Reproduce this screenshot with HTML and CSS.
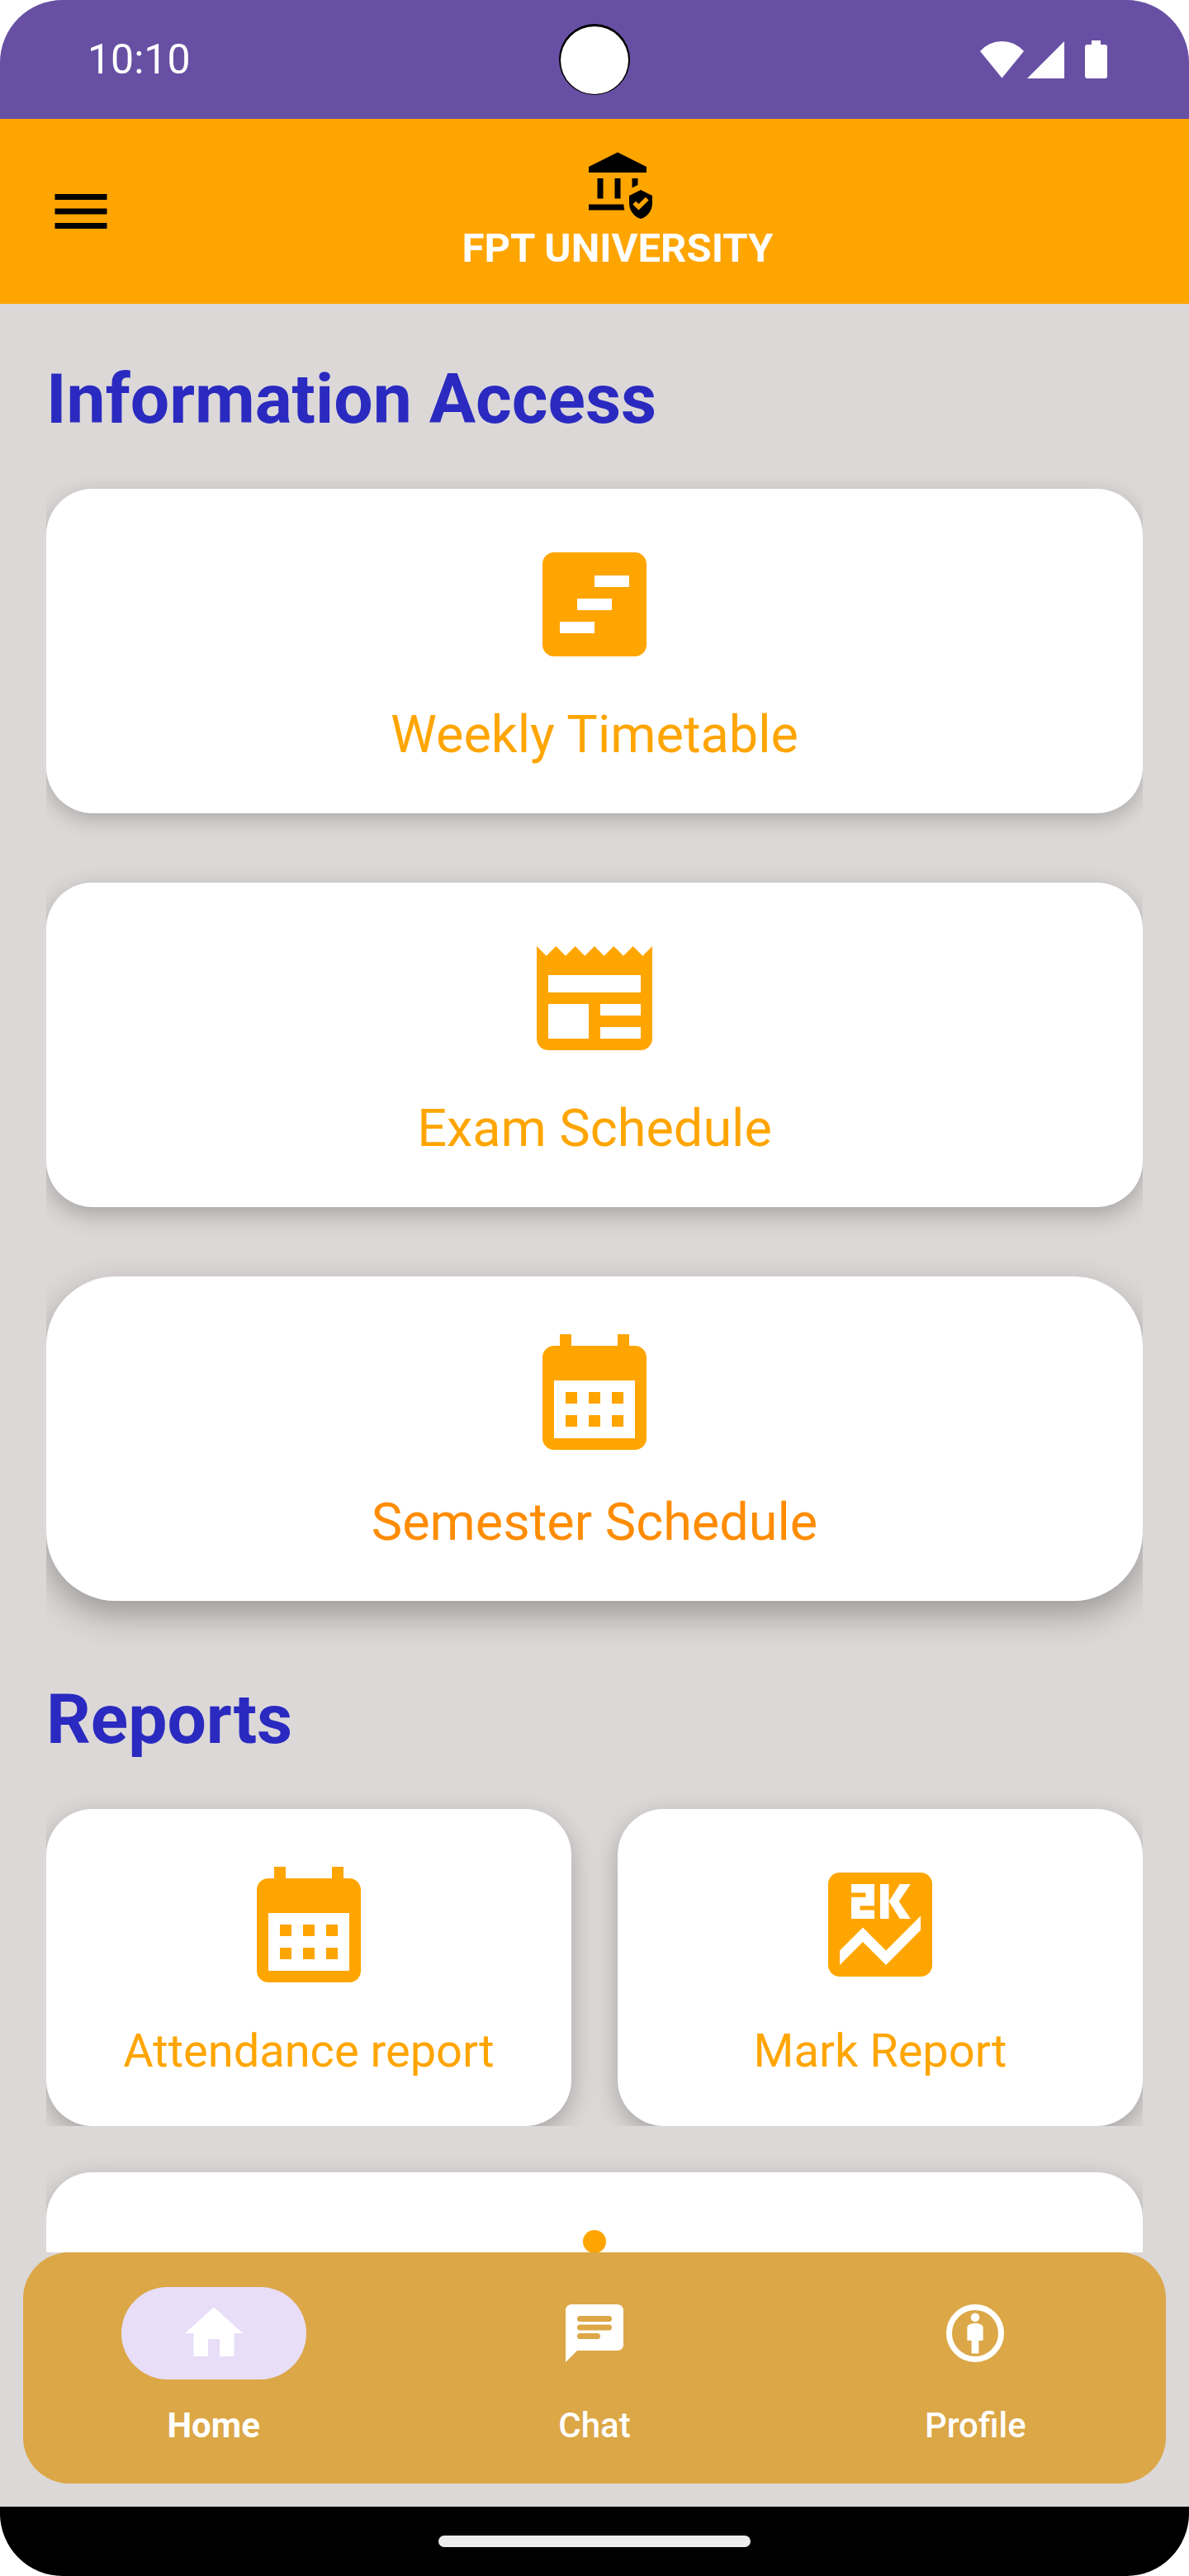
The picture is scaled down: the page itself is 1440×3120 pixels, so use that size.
FILE: index.html
```html
<!DOCTYPE html>
<html lang="en">
<head>
<meta charset="utf-8">
<meta name="viewport" content="width=device-width, initial-scale=1">
<title>FPT University</title>
<link rel="stylesheet" href="styles.css">
</head>
<body>
<div class="phone">
  <div class="status">
    <time class="clock">10:10</time>
    <svg class="camera" viewBox="0 0 86 86" aria-hidden="true"><circle cx="43" cy="43" r="43"/><circle cx="43" cy="44" r="41" fill="#fff"/></svg>
    <svg class="signals" viewBox="0 0 155 46" aria-hidden="true">
      <path d="M0 13Q11 1 26.500 1Q42 1 53 13L26.500 45.500z"/>
      <path d="M57 46 102 1v45z"/>
      <path d="M135 0h11v5h5q3 0 3 3v35q0 3-3 3h-21q-3 0-3-3V8q0-3 3-3h5z"/>
    </svg>
  </div>

  <header class="appbar">
    <button class="menu" type="button" aria-label="Menu">
      <svg class="icon" viewBox="0 0 24 24"><path d="M3 18h18v-2H3v2zm0-5h18v-2H3v2zm0-7v2h18V6H3z"/></svg>
    </button>
    <div class="brand">
      <svg class="icon" viewBox="0 0 24 24" aria-hidden="true"><path d="M5 10h2v7H5zM11 10h2v7h-2zM22 6 12 1 2 6v2h20zM2 19v2h12.400a7 7 0 0 1-.3-2zM19 12.300V10h-2v3.300z"/><path fill-rule="evenodd" d="M20 14l-4 2v2.550c0 2.520 1.710 4.880 4 5.450 2.290-.57 4-2.930 4-5.450V16l-4-2zm-.72 7-2.030-2.030 1.060-1.060.97.97 2.410-2.380 1.060 1.060L19.280 21z"/></svg>
      <span class="brand-name">FPT UNIVERSITY</span>
    </div>
  </header>

  <main class="content">
    <h1 class="title">Information Access</h1>
    <div class="stack">
      <a class="card" href="#timetable">
        <svg class="card-icon" viewBox="0 0 24 24" aria-hidden="true"><path fill-rule="evenodd" d="M19 3H5c-1.100 0-2 .9-2 2v14c0 1.100.9 2 2 2h14c1.100 0 2-.9 2-2V5c0-1.100-.9-2-2-2zM12 17H6v-2h6zm3-4H9v-2h6zm3-4h-6V7h6z"/></svg>
        <span class="label">Weekly Timetable</span>
      </a>
      <a class="card raised" href="#exams">
        <svg class="card-icon" viewBox="0 0 24 24" aria-hidden="true"><path fill-rule="evenodd" d="M22 3l-1.670 1.670L18.670 3 17 4.670 15.330 3l-1.660 1.670L12 3l-1.670 1.670L8.670 3 7 4.670 5.330 3 3.670 4.670 2 3v16c0 1.100.9 2 2 2h16c1.100 0 2-.9 2-2zM11 19H4v-6h7zm9 0h-7v-2h7zm0-4h-7v-2h7zm0-4H4V8h16z"/></svg>
        <span class="label">Exam Schedule</span>
      </a>
      <a class="card floating" href="#semester">
        <svg class="card-icon" viewBox="0 0 24 24" aria-hidden="true"><path fill-rule="evenodd" d="M19 4h-1V2h-2v2H8V2H6v2H5c-1.100 0-2 .9-2 2v14c0 1.100.9 2 2 2h14c1.100 0 2-.9 2-2V6c0-1.100-.9-2-2-2zm0 16H5V10h14z"/><path d="M7 12h2v2H7zM11 12h2v2h-2zM15 12h2v2h-2zM7 16h2v2H7zM11 16h2v2h-2zM15 16h2v2h-2z"/></svg>
        <span class="label">Semester Schedule</span>
      </a>
    </div>

    <h1 class="title">Reports</h1>
    <div class="pair">
      <a class="card raised small" href="#attendance">
        <svg class="card-icon" viewBox="0 0 24 24" aria-hidden="true"><path fill-rule="evenodd" d="M19 4h-1V2h-2v2H8V2H6v2H5c-1.100 0-2 .9-2 2v14c0 1.100.9 2 2 2h14c1.100 0 2-.9 2-2V6c0-1.100-.9-2-2-2zm0 16H5V10h14z"/><path d="M7 12h2v2H7zM11 12h2v2h-2zM15 12h2v2h-2zM7 16h2v2H7zM11 16h2v2h-2zM15 16h2v2h-2z"/></svg>
        <span class="label">Attendance report</span>
      </a>
      <a class="card raised small" href="#marks">
        <svg class="card-icon" viewBox="0 0 24 24" aria-hidden="true"><rect x="3" y="3" width="18" height="18" rx="2"/><path fill="#fff" d="M7 5h4v3.750H8.500v.75H11V11H7V7.250h2.500V6.500H7zM12 5h1.500v6H12zM15.400 5h1.850l-2 3 2 3H15.400l-1.900-3zM5 19l4-4 4 4 6-6.050V10.500l-6 6-4-4-4 4z"/></svg>
        <span class="label">Mark Report</span>
      </a>
    </div>
    <a class="card raised small" href="#more" aria-label="More">
      <svg class="card-icon" viewBox="0 0 24 24" aria-hidden="true"><circle cx="12" cy="4" r="2"/><path d="M21 9h-6v13h-2v-6h-2v6H9V9H3V7h18z"/></svg>
    </a>
  </main>

  <nav class="tabs">
    <a class="tab active" href="#home" aria-current="page">
      <span class="tab-icon"><svg class="icon" viewBox="0 0 24 24" aria-hidden="true"><path d="M10 20v-6h4v6h5v-8h3L12 3 2 12h3v8z"/></svg></span>
      <span>Home</span>
    </a>
    <a class="tab" href="#chat">
      <span class="tab-icon"><svg class="icon" viewBox="0 0 24 24" aria-hidden="true"><path fill-rule="evenodd" d="M20 2H4c-1.100 0-2 .9-2 2v18l4-4h14c1.100 0 2-.9 2-2V4c0-1.100-.9-2-2-2zM7 6h10a1 1 0 0 1 0 2H7a1 1 0 0 1 0-2zm0 3h10a1 1 0 0 1 0 2H7a1 1 0 0 1 0-2zm0 3h6a1 1 0 0 1 0 2H7a1 1 0 0 1 0-2z"/></svg></span>
      <span>Chat</span>
    </a>
    <a class="tab" href="#profile">
      <span class="tab-icon"><svg class="icon" viewBox="0 0 24 24" aria-hidden="true"><circle cx="12" cy="12" r="9" fill="none" stroke="currentColor" stroke-width="2"/><circle cx="12" cy="6.500" r="1.500"/><path d="M12 8.500c-.91 0-2.750.46-2.750 1.380v4.620h1.500V19h2.500v-4.500h1.500V9.880c0-.91-1.840-1.380-2.750-1.380z"/></svg></span>
      <span>Profile</span>
    </a>
  </nav>

  <div class="gesture"><span class="handle"></span></div>
</div>
</body>
</html>
```
FILE: styles.css
```css
* { box-sizing: border-box; }

body {
  margin: 0;
  background: #fff;
  font-family: Roboto, "Liberation Sans", sans-serif;
}

a { color: inherit; text-decoration: none; }
svg { display: block; fill: currentColor; }

.phone {
  display: flex;
  flex-direction: column;
  height: 100vh;
  overflow: hidden;
  border-radius: 76px;
  background: #dcd8d8;
}

.status {
  display: grid;
  grid-template-columns: 1fr auto 1fr;
  align-items: center;
  height: 144px;
  padding: 0 98px;
  flex: none;
  background: #6750a4;
}
.clock { padding-left: 8px; color: #fff; font-size: 50px; line-height: 60px; }
.camera { width: 86px; height: 86px; color: #000; }
.signals { width: 155px; height: 46px; color: #fff; justify-self: end; }

.icon { width: 84px; height: 84px; }

.appbar {
  display: grid;
  align-items: center;
  height: 224px;
  padding-left: 56px;
  flex: none;
  background: #ffa500;
}
.menu {
  grid-area: 1 / 1;
  justify-self: start;
  padding: 0;
  border: 0;
  background: none;
  color: #000;
}
.brand {
  grid-area: 1 / 1;
  justify-self: center;
  display: flex;
  flex-direction: column;
  align-items: center;
  gap: 6px;
  color: #000;
}
.brand-name { color: #fff; font-size: 49px; font-weight: 700; line-height: 60px; }

.content {
  flex: 1;
  min-height: 0;
  margin: 0 56px;
  overflow: hidden;
}
.title {
  margin: 0;
  padding: 64px 0 56px;
  color: #2a2ac0;
  font-size: 84px;
  font-weight: 700;
  line-height: 104px;
}
.stack { display: grid; gap: 84px; margin-bottom: 28px; }
.pair {
  display: grid;
  grid-template-columns: 1fr 1fr;
  gap: 56px;
  margin-bottom: 56px;
  clip-path: inset(-56px 0 0);
}

.card {
  display: flex;
  flex-direction: column;
  align-items: center;
  gap: 34px;
  padding: 56px;
  border-radius: 56px;
  background: #fff;
  box-shadow: 0 7px 24px rgba(0, 0, 0, 0.22);
  color: #ffa500;
  font-size: 63px;
  line-height: 79px;
}
.card.raised { box-shadow: 0 9px 28px rgba(0, 0, 0, 0.25); }
.card.floating { border-radius: 84px; box-shadow: 0 16px 40px rgba(0, 0, 0, 0.3); }
.card.floating .label { color: #ff8c00; }
.card.small { font-size: 56px; line-height: 70px; }
.card-icon { width: 168px; height: 168px; }

.tabs {
  display: grid;
  grid-template-columns: repeat(3, 1fr);
  flex: none;
  margin: 0 28px 28px;
  padding: 42px 0;
  border-radius: 56px;
  background: #dca747;
}
.tab {
  display: flex;
  flex-direction: column;
  align-items: center;
  gap: 28px;
  color: #fff;
  font-size: 42px;
  font-weight: 500;
  line-height: 56px;
}
.tab.active { font-weight: 700; }
.tab-icon {
  display: grid;
  place-items: center;
  width: 224px;
  height: 112px;
  border-radius: 56px;
}
.active .tab-icon { background: #e8def8; }

.gesture {
  display: grid;
  place-items: center;
  height: 84px;
  flex: none;
  background: #000;
}
.handle { width: 378px; height: 14px; border-radius: 7px; background: #ececec; }
```
